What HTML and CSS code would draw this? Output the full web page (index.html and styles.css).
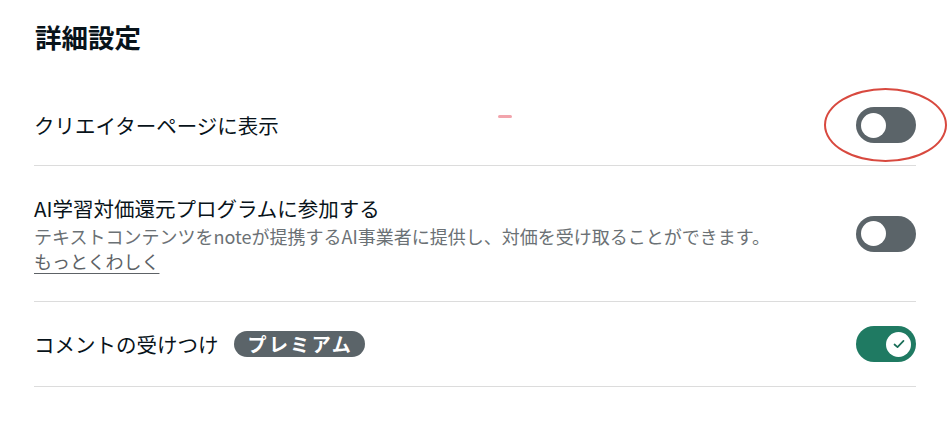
FILE: index.html
```html
<!DOCTYPE html>
<html lang="ja">
<head>
<meta charset="utf-8">
<link rel="stylesheet" href="styles.css">
</head>
<body>
<div class="page">
  <h2 class="heading">詳細設定</h2>
  <div class="row row-first">
    <div class="label">クリエイターページに表示</div>
    <div class="toggle-wrap">
      <span class="toggle"><span class="knob"></span></span>
      <span class="annot-ring"></span>
    </div>
    <span class="annot-dash"></span>
  </div>
  <div class="row row-tall">
    <div class="text">
      <div class="label">AI学習対価還元プログラムに参加する</div>
      <div class="desc">テキストコンテンツをnoteが提携するAI事業者に提供し、対価を受け取ることができます。</div>
      <a class="more" href="#">もっとくわしく</a>
    </div>
    <span class="toggle"><span class="knob"></span></span>
  </div>
  <div class="row">
    <div class="label">コメントの受けつけ<span class="badge">プレミアム</span></div>
    <span class="toggle on"><span class="knob"><svg viewBox="0 0 16 16" width="16" height="16"><path d="M3.5 8.5 L6.5 11.2 L12.5 4.8" fill="none" stroke="#1a6e58" stroke-width="1.7" stroke-linecap="round" stroke-linejoin="round"/></svg></span></span>
  </div>
</div>
</body>
</html>
```
FILE: styles.css
```css
* { box-sizing: border-box; }
html, body { margin: 0; padding: 0; background: #fff; }
body {
  font-family: "Noto Sans CJK JP", "Noto Sans", sans-serif;
  color: #08131a;
}
.page {
  width: 952px;
  height: 430px;
  padding: 17px 36px 0 34px;
  position: relative;
}
.heading {
  margin: 0 0 0 1px;
  font-size: 26.5px;
  line-height: 40px;
  font-weight: 700;
}
.row {
  display: flex;
  align-items: center;
  justify-content: space-between;
  padding: 24px 0;
  border-bottom: 1px solid #dcdcdc;
  position: relative;
}
.row-first { margin-top: 28px; padding: 22px 0; }
.row-tall { padding: 27px 0 27px; }
.label {
  font-size: 20.5px;
  line-height: 30px;
  display: flex;
  align-items: center;
}
.text { display: flex; flex-direction: column; }
.desc {
  font-size: 18px;
  line-height: 25px;
  color: #6b7175;
  margin-top: 1px;
}
.more {
  font-size: 18px;
  line-height: 25px;
  color: #5d6266;
  text-decoration: underline;
  text-underline-offset: 4px;
  text-decoration-thickness: 1px;
  width: max-content;
}
.badge {
  display: inline-block;
  margin-left: 15px;
  background: #5b6469;
  color: #fff;
  font-size: 19px;
  font-weight: 700;
  line-height: 26px;
  height: 26px;
  padding: 0 12px 0 14px;
  border-radius: 13px;
  letter-spacing: 2.4px;
}
.toggle-wrap { position: relative; display: flex; }
.toggle {
  width: 60px;
  height: 36px;
  border-radius: 18px;
  background: #5b6469;
  display: flex;
  align-items: center;
  padding: 0 5px;
  flex: none;
}
.toggle .knob {
  width: 25px;
  height: 25px;
  border-radius: 50%;
  background: #fff;
  display: flex;
  align-items: center;
  justify-content: center;
}
.toggle.on { background: #1f7a62; justify-content: flex-end; }
.annot-ring {
  position: absolute;
  left: -32px;
  top: -19px;
  width: 123px;
  height: 74px;
  border: 2px solid #d8493f;
  border-radius: 50%;
}
.annot-dash {
  position: absolute;
  left: 464px;
  top: 30px;
  width: 14px;
  height: 3px;
  border-radius: 2px;
  background: #f2a4ac;
}
```
